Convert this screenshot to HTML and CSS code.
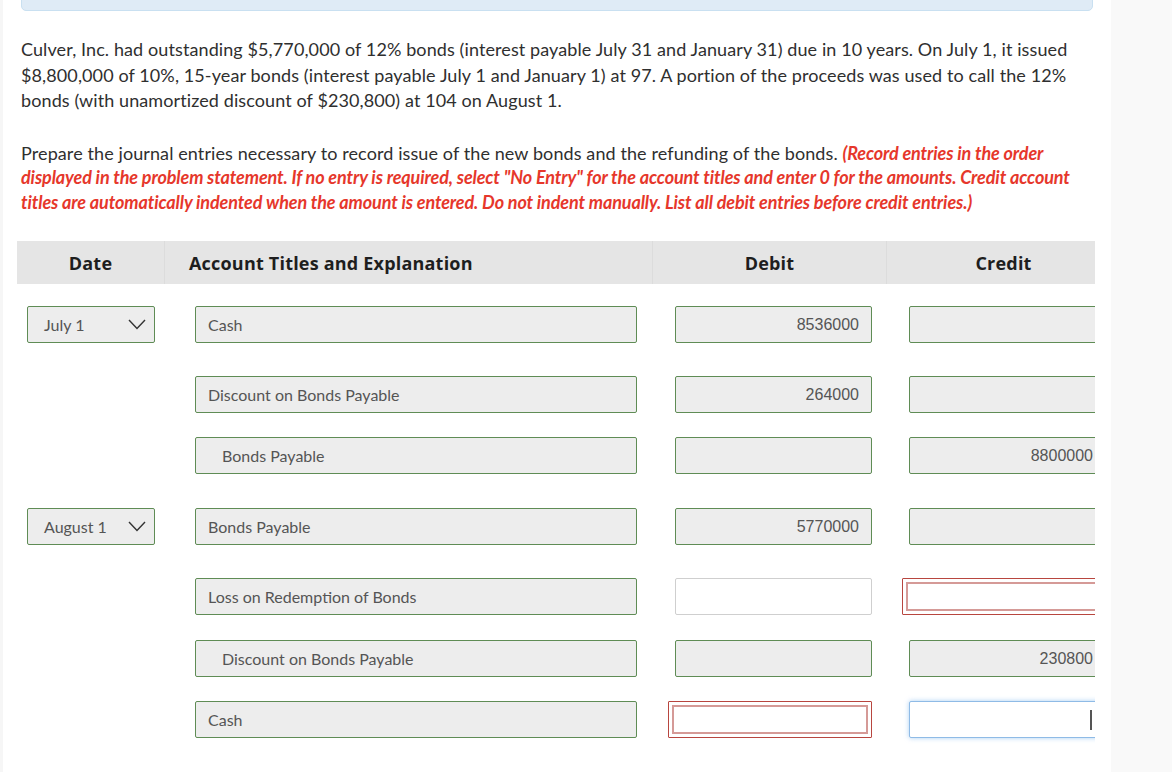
FILE: index.html
```html
<!DOCTYPE html>
<html lang="en">
<head>
  <meta charset="UTF-8" />
  <title>Journal Entries</title>
  <link rel="stylesheet" href="styles.css">
</head>
<body>
  <main class="page">
    <div class="notice"></div>

    <p class="question">
      Culver, Inc. had outstanding $5,770,000 of 12% bonds (interest payable July 31 and January 31) due in 10 years. On July 1, it issued<br>
      $8,800,000 of 10%, 15-year bonds (interest payable July 1 and January 1) at 97. A portion of the proceeds was used to call the 12%<br>
      bonds (with unamortized discount of $230,800) at 104 on August 1.
    </p>

    <p class="question">
      Prepare the journal entries necessary to record issue of the new bonds and the refunding of the bonds.
      <em class="hint">(Record entries in the order<br>displayed in the problem statement. If no entry is required, select "No Entry" for the account titles and enter 0 for the amounts. Credit account<br>titles are automatically indented when the amount is entered. Do not indent manually. List all debit entries before credit entries.)</em>
    </p>

    <div class="journal">
      <div class="journal-head">
        <div class="col-date">Date</div>
        <div class="col-account">Account Titles and Explanation</div>
        <div class="col-amount">Debit</div>
        <div class="col-amount">Credit</div>
      </div>

      <div class="entry first">
        <div class="cell"><div class="select">July 1 <svg class="chevron" width="18" height="11" viewBox="0 0 18 11"><polyline points="1,1 9,9.5 17,1" /></svg></div></div>
        <div class="cell"><div class="field account">Cash</div></div>
        <div class="cell"><div class="field amount">8536000</div></div>
        <div class="cell"><div class="field amount"></div></div>
      </div>

      <div class="entry spaced">
        <div class="cell"></div>
        <div class="cell"><div class="field account">Discount on Bonds Payable</div></div>
        <div class="cell"><div class="field amount">264000</div></div>
        <div class="cell"><div class="field amount"></div></div>
      </div>

      <div class="entry">
        <div class="cell"></div>
        <div class="cell"><div class="field account indent">Bonds Payable</div></div>
        <div class="cell"><div class="field amount"></div></div>
        <div class="cell"><div class="field amount">8800000</div></div>
      </div>

      <div class="entry spaced-more">
        <div class="cell"><div class="select">August 1 <svg class="chevron" width="18" height="11" viewBox="0 0 18 11"><polyline points="1,1 9,9.5 17,1" /></svg></div></div>
        <div class="cell"><div class="field account">Bonds Payable</div></div>
        <div class="cell"><div class="field amount">5770000</div></div>
        <div class="cell"><div class="field amount"></div></div>
      </div>

      <div class="entry spaced">
        <div class="cell"></div>
        <div class="cell"><div class="field account">Loss on Redemption of Bonds</div></div>
        <div class="cell"><div class="field amount empty"></div></div>
        <div class="cell"><div class="field amount error"><span class="error-inner"></span></div></div>
      </div>

      <div class="entry loose">
        <div class="cell"></div>
        <div class="cell"><div class="field account indent">Discount on Bonds Payable</div></div>
        <div class="cell"><div class="field amount"></div></div>
        <div class="cell"><div class="field amount">230800</div></div>
      </div>

      <div class="entry">
        <div class="cell"></div>
        <div class="cell"><div class="field account">Cash</div></div>
        <div class="cell"><div class="field amount error"><span class="error-inner"></span></div></div>
        <div class="cell"><div class="field amount focused"><span class="caret"></span></div></div>
      </div>
    </div>
  </main>
  <aside class="side"></aside>
</body>
</html>
```

FILE: styles.css
```css
* {
  box-sizing: border-box;
}

body {
  margin: 0;
  display: flex;
  min-height: 100vh;
  overflow: hidden;
  font-family: Lato, "Open Sans", sans-serif;
  color: #2f2f2f;
  background: #fff;
}

.page {
  width: 1111px;
  flex: none;
  border-left: 3px solid #f6f6f6;
  padding-left: 18px;
}

.side {
  flex: 1;
  background: #f9f9f9;
}

.notice {
  width: 1072px;
  height: 41px;
  margin-top: -30px;
  background: #dfebf6;
  border: 1px solid #c9e0f1;
  border-radius: 5px;
}

.question {
  margin: 26px 0 0;
  width: 1088px;
  font-size: 18px;
  line-height: 25.5px;
  letter-spacing: 0.1px;
  white-space: nowrap;
}

.question + .question {
  margin-top: 27px;
  line-height: 24.6px;
}

.hint {
  font-weight: 700;
  font-style: italic;
  color: #e6372b;
  letter-spacing: -0.12px;
}

/* journal table */

.journal {
  width: 1078px;
  margin: 27px 0 0 -4px;
  overflow: hidden;
  padding-bottom: 40px;
}

.journal-head,
.entry {
  display: grid;
  grid-template-columns: 148px 488px 234px 234px;
}

.journal-head {
  height: 43px;
  background: #e5e5e5;
  font-family: "Open Sans", Lato, sans-serif;
  font-size: 18px;
  font-weight: 700;
  letter-spacing: 0.2px;
  color: #1e1e1e;
}

.journal-head > div {
  display: flex;
  align-items: center;
  border-right: 1px solid #dcdcdc;
}

.col-date,
.col-amount {
  justify-content: center;
}

.col-account {
  padding-left: 24px;
}

.entry {
  margin-top: 24px;
  height: 37px;
}

.entry.first {
  margin-top: 22px;
}

.entry.loose {
  margin-top: 25px;
}

.entry.spaced {
  margin-top: 33px;
}

.entry.spaced-more {
  margin-top: 34px;
}

.select,
.field {
  height: 37px;
  display: flex;
  align-items: center;
  background: #ededed;
  border: 1px solid #5f8c55;
  border-radius: 2px;
  font-size: 16px;
  color: #555;
}

.select {
  width: 128px;
  margin-left: 10px;
  padding: 0 8px 0 16px;
  justify-content: space-between;
}

.chevron polyline {
  fill: none;
  stroke: #333;
  stroke-width: 1.4;
}

.field.account {
  width: 442px;
  margin-left: 30px;
  padding-left: 12px;
}

.field.account.indent {
  padding-left: 26px;
}

.field.amount {
  width: 197px;
  margin-left: 22px;
  padding-right: 12px;
  justify-content: flex-end;
  font-family: "Liberation Sans", Arial, sans-serif;
}

.field.empty {
  background: #fff;
  border-color: #cfcfcf;
}

.field.error {
  width: 204px;
  margin-left: 15px;
  padding: 3px;
  background: #fff;
  border: 1px solid #b8463f;
  border-radius: 1px;
}

.error-inner {
  display: block;
  width: 100%;
  height: 100%;
  border: 2px solid #d59a97;
}

.field.focused {
  background: #fff;
  border-color: #8fbbe6;
  box-shadow: 0 0 5px rgba(102, 170, 235, 0.55);
}

.caret {
  display: block;
  width: 2px;
  height: 20px;
  background: #555;
  margin-right: 1px;
}
```
